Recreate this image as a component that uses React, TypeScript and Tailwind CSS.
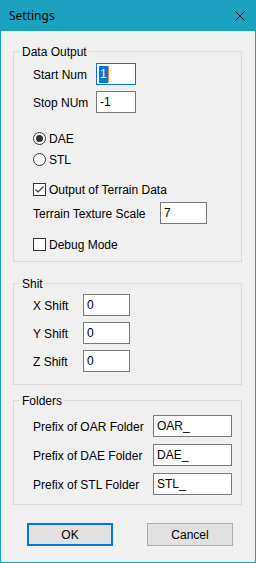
import type { ReactNode } from 'react';

// Settings dialog · WinForms-style window

const FONT = { fontFamily: '"Liberation Sans", Arial, sans-serif' };

function Field({ width, value, focused }: { width: string; value: string; focused?: boolean }) {
  return (
    <div
      className={`${width} h-[22px] shrink-0 flex items-center pl-[2px] bg-white border ${
        focused ? 'border-[#0078d7]' : 'border-[#7a7a7a]'
      } text-[12px] leading-[16px] text-black`}
    >
      {focused ? (
        <>
          <span className="bg-[#0078d7] text-white leading-[17px] px-[1px]">{value}</span>
          <span className="w-[1px] h-[16px] bg-[#e8892f]" />
        </>
      ) : (
        <span className="pl-[1px]">{value}</span>
      )}
    </div>
  );
}

function Row({ label, labelWidth, className = '', children }: {
  label: string;
  labelWidth: string;
  className?: string;
  children: ReactNode;
}) {
  return (
    <div className={`flex items-center h-[22px] ${className}`}>
      <span className={`${labelWidth} shrink-0 text-[12px] text-black pt-[1px]`}>{label}</span>
      {children}
    </div>
  );
}

function Radio({ label, checked, className = '' }: { label: string; checked?: boolean; className?: string }) {
  return (
    <div className={`flex items-center h-[16px] gap-[3px] ${className}`}>
      <span className="w-[13px] h-[13px] rounded-full border border-[#333] bg-white flex items-center justify-center">
        {checked && <span className="w-[7px] h-[7px] rounded-full bg-[#333]" />}
      </span>
      <span className="text-[12px] text-black pt-[1px]">{label}</span>
    </div>
  );
}

function Check({ label, checked, className = '' }: { label: string; checked?: boolean; className?: string }) {
  return (
    <div className={`flex items-center h-[16px] gap-[3px] ${className}`}>
      <span className="w-[13px] h-[13px] border border-[#333] bg-white flex items-center justify-center">
        {checked && (
          <svg width="11" height="11" viewBox="0 0 11 11">
            <polyline points="1.5,5.5 4,8 9.5,2.5" fill="none" stroke="#333" strokeWidth="1.2" />
          </svg>
        )}
      </span>
      <span className="text-[12px] text-black pt-[1px]">{label}</span>
    </div>
  );
}

function Group({ title, className = '', children }: { title: string; className?: string; children: ReactNode }) {
  return (
    <fieldset className={`ml-[12px] w-[229px] border border-[#dcdcdc] ${className}`}>
      <legend className="ml-[6px] px-[2px] pt-[2px] text-[12px] leading-[13px] text-black">{title}</legend>
      <div className="pl-[19px] flex flex-col">{children}</div>
    </fieldset>
  );
}

export default function App() {
  return (
    <div className="w-[256px] h-[563px] bg-[#1ba1bf] flex flex-col select-none" style={FONT}>
      {/* Title bar */}
      <div className="h-[31px] shrink-0 flex items-center justify-between pl-[9px] pr-[11px]">
        <span className="text-[12px] text-black" style={{ fontFamily: '"Noto Sans", sans-serif' }}>
          Settings
        </span>
        <svg width="10" height="10" viewBox="0 0 10 10">
          <path d="M0.5 0.5 L9.5 9.5 M9.5 0.5 L0.5 9.5" stroke="#111" strokeWidth="1" />
        </svg>
      </div>

      <div className="flex-1 mx-[1px] mb-[1px] bg-[#f0f0f0] flex flex-col">
        <Group title="Data Output" className="mt-[13px] pt-[4px] pb-[9px]">
          <Row label="Start Num" labelWidth="w-[63px]">
            <Field width="w-[40px]" value="1" focused />
          </Row>
          <Row label="Stop NUm" labelWidth="w-[63px]" className="mt-[6px]">
            <Field width="w-[40px]" value="-1" />
          </Row>
          <Radio label="DAE" checked className="mt-[17px]" />
          <Radio label="STL" className="mt-[5px]" />
          <Check label="Output of Terrain Data" checked className="mt-[14px]" />
          <Row label="Terrain Texture Scale" labelWidth="w-[127px]" className="mt-[5px]">
            <Field width="w-[47px]" value="7" />
          </Row>
          <Check label="Debug Mode" className="mt-[12px]" />
        </Group>

        <Group title="Shit" className="mt-[14px] pt-[3px] pb-[12px]">
          <Row label="X Shift" labelWidth="w-[50px]">
            <Field width="w-[47px]" value="0" />
          </Row>
          <Row label="Y Shift" labelWidth="w-[50px]" className="mt-[6px]">
            <Field width="w-[47px]" value="0" />
          </Row>
          <Row label="Z Shift" labelWidth="w-[50px]" className="mt-[6px]">
            <Field width="w-[47px]" value="0" />
          </Row>
        </Group>

        <Group title="Folders" className="mt-[8px] pt-[7px] pb-[9px]">
          <Row label="Prefix of OAR Folder" labelWidth="w-[120px]">
            <Field width="w-[79px]" value="OAR_" />
          </Row>
          <Row label="Prefix of DAE Folder" labelWidth="w-[120px]" className="mt-[7px]">
            <Field width="w-[79px]" value="DAE_" />
          </Row>
          <Row label="Prefix of STL Folder" labelWidth="w-[120px]" className="mt-[7px]">
            <Field width="w-[79px]" value="STL_" />
          </Row>
        </Group>

        <div className="mt-[18px] ml-[26px] flex gap-[34px]">
          <button className="w-[86px] h-[23px] bg-[#e1e1e1] border-2 border-[#0078d7] text-[12px] text-black">
            OK
          </button>
          <button className="w-[86px] h-[23px] bg-[#e1e1e1] border border-[#adadad] text-[12px] text-black">
            Cancel
          </button>
        </div>
      </div>
    </div>
  );
}
